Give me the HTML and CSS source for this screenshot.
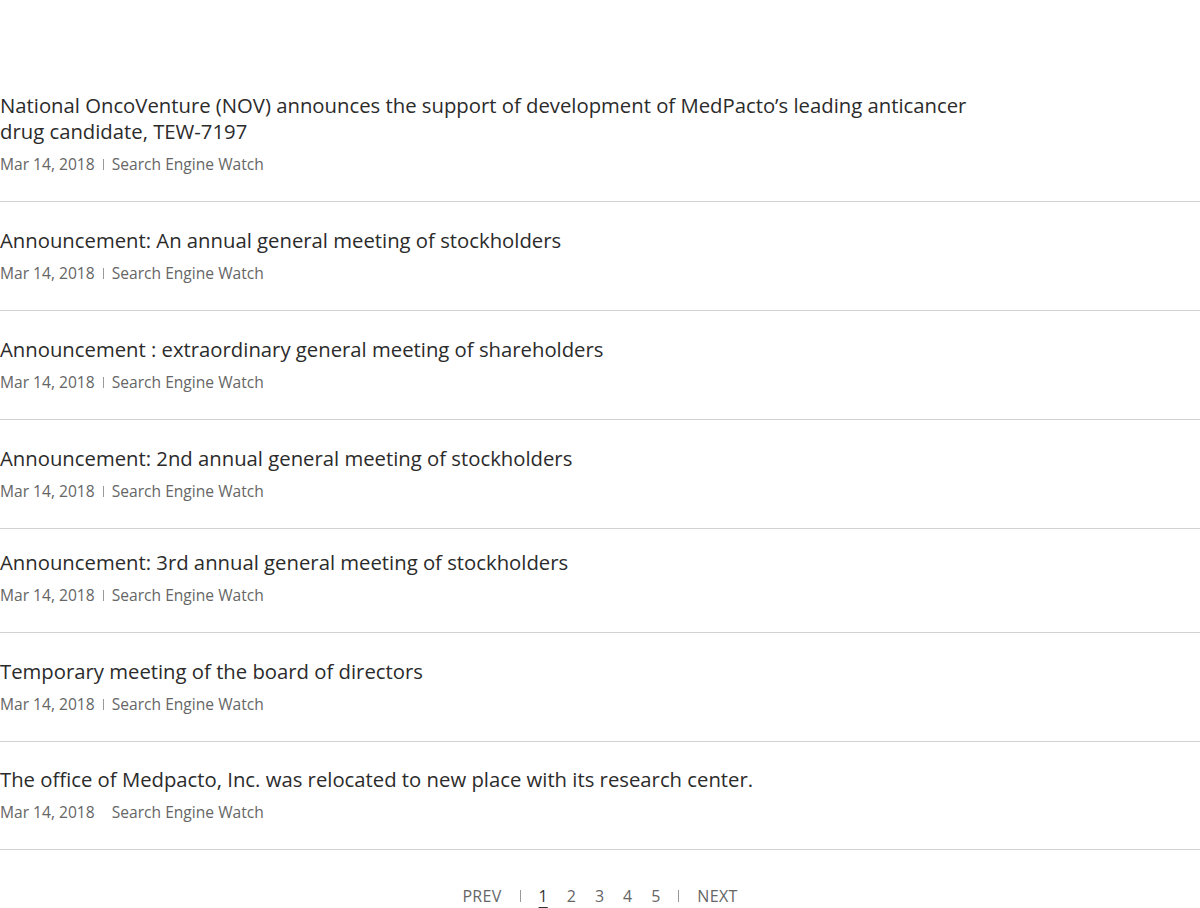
FILE: index.html
```html
<!DOCTYPE html>
<html lang="en">
<head>
<meta charset="utf-8">
<title>News</title>
<link rel="stylesheet" href="styles.css">
</head>
<body>
<main class="board">
  <ul class="news-list">
    <li class="news-item">
      <a class="news-title" href="#">National OncoVenture (NOV) announces the support of development of MedPacto’s leading anticancer drug candidate, TEW-7197</a>
      <div class="news-meta"><span class="date">Mar 14, 2018</span><span class="bar"></span><span class="source">Search Engine Watch</span></div>
    </li>
    <li class="news-item">
      <a class="news-title" href="#">Announcement: An annual general meeting of stockholders</a>
      <div class="news-meta"><span class="date">Mar 14, 2018</span><span class="bar"></span><span class="source">Search Engine Watch</span></div>
    </li>
    <li class="news-item">
      <a class="news-title" href="#">Announcement : extraordinary general meeting of shareholders</a>
      <div class="news-meta"><span class="date">Mar 14, 2018</span><span class="bar"></span><span class="source">Search Engine Watch</span></div>
    </li>
    <li class="news-item">
      <a class="news-title" href="#">Announcement: 2nd annual general meeting of stockholders</a>
      <div class="news-meta"><span class="date">Mar 14, 2018</span><span class="bar"></span><span class="source">Search Engine Watch</span></div>
    </li>
    <li class="news-item news-item--tight">
      <a class="news-title" href="#">Announcement: 3rd annual general meeting of stockholders</a>
      <div class="news-meta"><span class="date">Mar 14, 2018</span><span class="bar"></span><span class="source">Search Engine Watch</span></div>
    </li>
    <li class="news-item">
      <a class="news-title" href="#">Temporary meeting of the board of directors</a>
      <div class="news-meta"><span class="date">Mar 14, 2018</span><span class="bar"></span><span class="source">Search Engine Watch</span></div>
    </li>
    <li class="news-item news-item--last">
      <a class="news-title" href="#">The office of Medpacto, Inc. was relocated to new place with its research center.</a>
      <div class="news-meta"><span class="date">Mar 14, 2018</span><span class="bar bar--hidden"></span><span class="source">Search Engine Watch</span></div>
    </li>
  </ul>
  <nav class="pager">
    <a class="pager-link" href="#">PREV</a>
    <span class="pager-bar"></span>
    <div class="pager-nums">
      <a class="pager-num is-current" href="#">1</a>
      <a class="pager-num" href="#">2</a>
      <a class="pager-num" href="#">3</a>
      <a class="pager-num" href="#">4</a>
      <a class="pager-num" href="#">5</a>
    </div>
    <span class="pager-bar"></span>
    <a class="pager-link" href="#">NEXT</a>
  </nav>
</main>
</body>
</html>
```

FILE: styles.css
```css
html, body {
  margin: 0;
  padding: 0;
  background: #fff;
}

body {
  font-family: "Open Sans", "Noto Sans", "Liberation Sans", sans-serif;
  color: #333;
}

.board {
  padding-top: 67px;
}

.news-list {
  list-style: none;
  margin: 0;
  padding: 0;
}

.news-item {
  padding: 25px 0 25px;
  border-bottom: 1px solid #d2d2d2;
  display: flex;
  flex-direction: column;
}

.news-item--tight {
  padding-top: 20px;
}

.news-item--last {
  padding-top: 24px;
}

.news-title {
  display: block;
  max-width: 1000px;
  font-size: 20.3px;
  line-height: 26px;
  color: #2b2b2b;
  text-decoration: none;
}

.news-meta {
  display: flex;
  align-items: center;
  margin-top: 8px;
  font-size: 15.6px;
  line-height: 24px;
  color: #666;
}

.bar {
  width: 1px;
  height: 11px;
  background: #9a9a9a;
  margin: 0 8px;
}

.bar--hidden {
  background: transparent;
}

.pager {
  display: flex;
  justify-content: center;
  align-items: center;
  padding-top: 34px;
  font-size: 16px;
  line-height: 24px;
  color: #666;
}

.pager-link {
  color: #666;
  text-decoration: none;
  letter-spacing: 0.3px;
}

.pager-bar {
  width: 1px;
  height: 12px;
  background: #999;
  margin: 0 18px;
}

.pager-nums {
  display: flex;
  gap: 19px;
}

.pager-num {
  color: #666;
  text-decoration: none;
}

.pager-num.is-current {
  color: #333;
  text-decoration: underline;
  text-underline-offset: 5px;
}
```
